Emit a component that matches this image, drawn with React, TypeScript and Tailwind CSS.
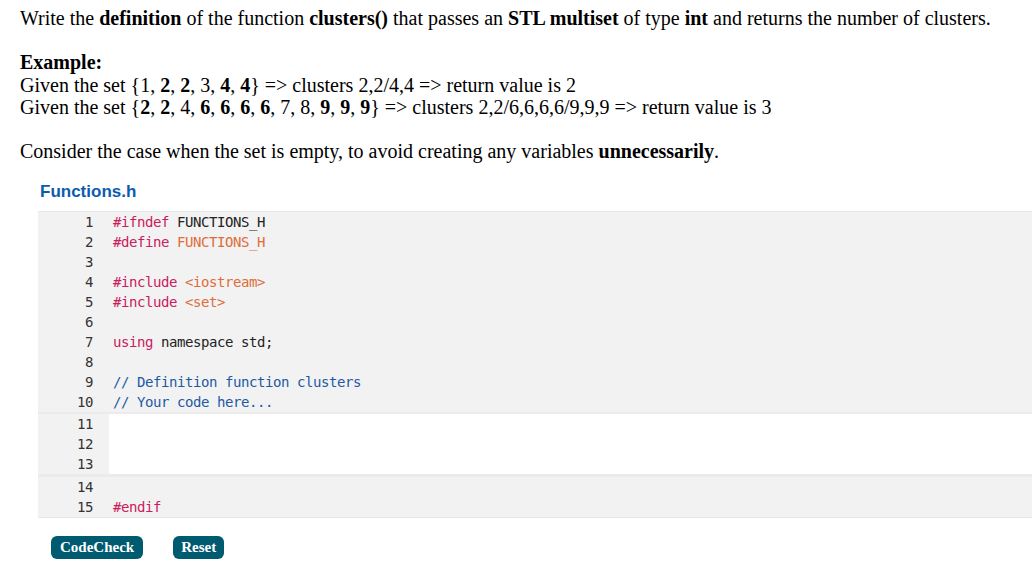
import React from "react";

const serif = { fontFamily: '"Liberation Serif", "Times New Roman", serif' };
const mono = { fontFamily: '"DejaVu Sans Mono", monospace' };

const K = ({ children }: { children: React.ReactNode }) => <span className="text-[#c8205f]">{children}</span>;
const O = ({ children }: { children: React.ReactNode }) => <span className="text-[#dd6d3a]">{children}</span>;
const C = ({ children }: { children: React.ReactNode }) => <span className="text-[#1d5aa2]">{children}</span>;
const P = ({ children }: { children: React.ReactNode }) => <span className="text-[#222]">{children}</span>;

function Line({ n, children, white }: { n: number; children?: React.ReactNode; white?: boolean }) {
  return (
    <div className="flex h-[20px] leading-[21px]">
      <div className="w-[71px] shrink-0 pr-[16px] text-right text-[#333] bg-[#f2f2f2]">{n}</div>
      <div className={"flex-1 pl-[4px] whitespace-pre " + (white ? "bg-white" : "")}>{children}</div>
    </div>
  );
}

export default function App() {
  return (
    <div className="w-[1032px] h-[587px] bg-white overflow-hidden">
      <div className="pl-[20px] pt-[7px] text-[20px] leading-[22px] text-black" style={serif}>
        <div>
          Write the <b>definition</b> of the function <b>clusters()</b> that passes an <b>STL multiset</b> of type <b>int</b> and returns the number of clusters.
        </div>
        <div className="h-[22px]" />
        <div className="h-[23px]"><b>Example:</b></div>
        <div>
          Given the set {"{"}1, <b>2</b>, <b>2</b>, 3, <b>4</b>, <b>4</b>{"}"} =&gt; clusters 2,2/4,4 =&gt; return value is 2
        </div>
        <div>
          Given the set {"{"}<b>2</b>, <b>2</b>, 4, <b>6</b>, <b>6</b>, <b>6</b>, <b>6</b>, 7, 8, <b>9</b>, <b>9</b>, <b>9</b>{"}"} =&gt; clusters 2,2/6,6,6,6/9,9,9 =&gt; return value is 3
        </div>
        <div className="h-[22px]" />
        <div>
          Consider the case when the set is empty, to avoid creating any variables <b>unnecessarily</b>.
        </div>
      </div>

      <div
        className="mt-[20px] ml-[40px] text-[17px] leading-[20px] font-bold text-[#0b5cad]"
        style={{ fontFamily: '"Liberation Sans", Arial, sans-serif' }}
      >
        Functions.h
      </div>

      <div
        className="ml-[38px] mt-[9px] border-y border-[#e6e6e6] bg-[#f2f2f2] text-[14px] tracking-[-0.43px]"
        style={mono}
      >
        <Line n={1}><K>#ifndef</K> <P>FUNCTIONS_H</P></Line>
        <Line n={2}><K>#define</K> <O>FUNCTIONS_H</O></Line>
        <Line n={3} />
        <Line n={4}><K>#include</K> <O>&lt;iostream&gt;</O></Line>
        <Line n={5}><K>#include</K> <O>&lt;set&gt;</O></Line>
        <Line n={6} />
        <Line n={7}><K>using</K> <P>namespace std;</P></Line>
        <Line n={8} />
        <Line n={9}><C>// Definition function clusters</C></Line>
        <Line n={10}><C>// Your code here...</C></Line>
        <div className="h-[2px] bg-[#ebebeb]" />
        <Line n={11} white />
        <Line n={12} white />
        <Line n={13} white />
        <div className="h-[3px] bg-[#ebebeb]" />
        <Line n={14} />
        <Line n={15}><K>#endif</K></Line>
      </div>

      <div className="flex gap-[30px] ml-[51px] mt-[18px]" style={serif}>
        <button className="h-[23px] px-[9px] rounded-[6px] bg-[#005a70] text-white text-[15px] font-bold leading-[23px]">
          CodeCheck
        </button>
        <button className="h-[23px] px-[8px] rounded-[6px] bg-[#005a70] text-white text-[15px] font-bold leading-[23px]">
          Reset
        </button>
      </div>
    </div>
  );
}
